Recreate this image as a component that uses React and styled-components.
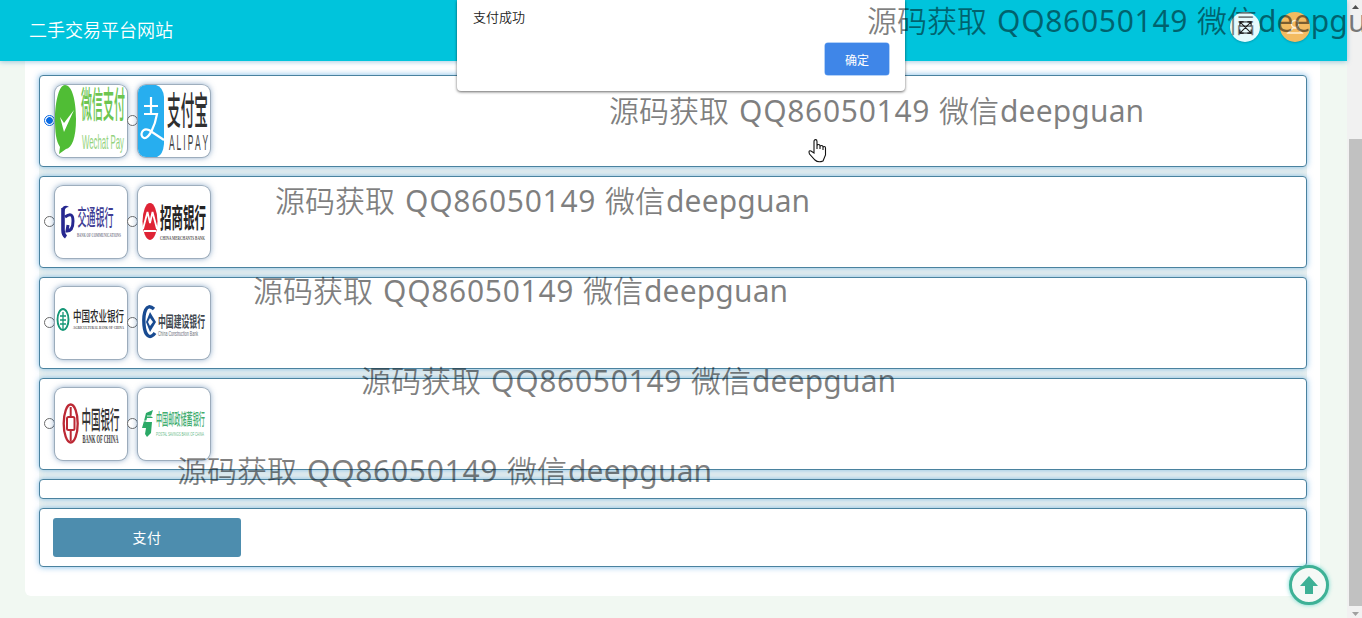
import React from "react";
import styled, { createGlobalStyle } from "styled-components";

const cjk = '"Noto Sans CJK SC", sans-serif';

const Global = createGlobalStyle`
  * { box-sizing: border-box; }
  html, body { margin: 0; height: 618px; overflow: hidden; }
  body { font-family: "Liberation Sans", ${cjk}; background: #f1f8f2; }
`;

const Screen = styled.div`
  position: relative;
  display: flex;
  width: 1362px;
  height: 618px;
  overflow: hidden;
  background: #f1f8f2;
`;

const Page = styled.div`
  width: 1347px;
  display: flex;
  flex-direction: column;
`;

const Header = styled.header`
  position: relative;
  z-index: 1;
  flex: none;
  display: flex;
  align-items: center;
  justify-content: space-between;
  height: 61px;
  padding: 0 37px 0 29px;
  background: #00c4dc;
  box-shadow: 0 1px 5px rgba(0, 110, 170, 0.35);
`;

const Title = styled.h1`
  margin: 0 0 4px;
  color: #fff;
  font: 350 18px/26px ${cjk};
`;

const HeaderTools = styled.div`
  display: flex;
  gap: 20px;
  margin-bottom: 7px;
`;

const RoundTool = styled.span`
  display: flex;
  align-items: center;
  justify-content: center;
  width: 30px;
  height: 30px;
  border-radius: 50%;
  background: ${(p) => p.$bg};
  box-shadow: 0 1px 2px rgba(0, 70, 90, 0.3);
`;

const Panel = styled.main`
  width: 1295px;
  height: 535px;
  margin-left: 25px;
  padding: 14px 13px 0 14px;
  background: #fff;
  border-radius: 0 0 6px 6px;
`;

const Form = styled.form`
  display: flex;
  flex-direction: column;
  gap: 9px;
  background: #f0f4f0;
  border-radius: 5px;
`;

const Row = styled.div`
  display: flex;
  align-items: center;
  height: ${(p) => p.$height}px;
  padding: 0 ${(p) => p.$pad || 4}px;
  border: 1px solid #4a829f;
  border-radius: 4px;
  background: #fff;
  box-shadow: 0 0 6px rgba(40, 140, 215, 0.6);
`;

const Option = styled.label`
  display: flex;
  align-items: center;
  width: 83px;
`;

const Radio = styled.span`
  flex: none;
  width: 11px;
  height: 11px;
  margin-bottom: 1px;
  border: 1px solid ${(p) => (p.$on ? "#0b6be4" : "#6a6a6a")};
  border-radius: 50%;
  background: ${(p) => (p.$on ? "radial-gradient(circle, #0b6be4 0 3px, #fff 3.7px)" : "#fff")};
`;

const Logo = styled.svg`
  flex: none;
  display: block;
  width: 72px;
  height: 72px;
  border-radius: 8px;
  background: #fff;
  box-shadow: 0 0 0 0.8px #93a3b2, 0 0 6px rgba(60, 110, 160, 0.75);
`;

const PayButton = styled.button`
  width: 188px;
  height: 39px;
  padding: 0 0 1px;
  border: 0;
  border-radius: 3px;
  background: #4d8dae;
  color: #fff;
  font: 400 14px/20px ${cjk};
  letter-spacing: 0.5px;
`;

const Scrollbar = styled.aside`
  width: 15px;
  display: flex;
  flex-direction: column;
  align-items: center;
  padding-left: 2px;
  background: #f1f1f1;
`;

const Arrow = styled.svg`
  flex: none;
  width: 13px;
  height: 13px;
`;

const Track = styled.div`
  flex: 1;
  width: 13px;
  padding-top: 126px;
`;

const Thumb = styled.div`
  height: 467px;
  background: #c1c1c1;
`;

const Dialog = styled.div`
  position: absolute;
  z-index: 2;
  left: 457px;
  top: 0;
  width: 448px;
  height: 91px;
  display: flex;
  flex-direction: column;
  justify-content: space-between;
  padding: 7px 16px 16px;
  border-radius: 0 0 4px 4px;
  background: #fff;
  box-shadow: 0 1px 3px rgba(0, 0, 0, 0.6);
`;

const Message = styled.p`
  margin: 0;
  color: #222;
  font: 350 13px/19px ${cjk};
`;

const Confirm = styled.button`
  align-self: flex-end;
  width: 64px;
  height: 32px;
  padding: 1px 0 0;
  border: 0;
  border-radius: 3px;
  background: #3f86e8;
  box-shadow: 0 0 0 0.5px #69a3f0;
  color: #fff;
  font: 400 12px/18px ${cjk};
`;

const Watermark = styled.div`
  position: absolute;
  z-index: 4;
  left: ${(p) => p.$x}px;
  top: ${(p) => p.$y}px;
  display: flex;
  white-space: nowrap;
  color: rgba(0, 0, 0, 0.5);
  font: 350 30px/40px ${cjk};
`;

const Han = styled.span`
  margin: -1px 1px 0 -1px;
`;

const Latin = styled.span`
  width: ${(p) => p.$width}px;
  font-family: "Noto Sans", sans-serif;
  font-weight: 400;
  padding: 1px 0 0 ${(p) => p.$indent || 0}px;
  letter-spacing: ${(p) => p.$spacing || 0}px;
`;

const Pointer = styled.svg`
  position: absolute;
  z-index: 5;
  left: 808px;
  top: 138px;
`;

const TopButton = styled.div`
  position: absolute;
  z-index: 3;
  left: 1289px;
  top: 565px;
  width: 40px;
  height: 40px;
  display: flex;
  align-items: center;
  justify-content: center;
  border: 3px solid #3eb196;
  border-radius: 50%;
  background: #f5f9f6;
  box-shadow: 0 0 4px rgba(50, 200, 190, 0.7);
`;

function Label({ x, y, size, width, color, children, serif, weight = 400, stretch = 1 }) {
  return (
    <text
      transform={`translate(${x} ${y}) scale(1 ${stretch})`}
      fontSize={size}
      textLength={width}
      lengthAdjust="spacingAndGlyphs"
      fill={color}
      fontWeight={weight}
      fontFamily={serif ? '"Liberation Serif", serif' : '"Liberation Sans", "Noto Sans CJK SC", sans-serif'}
    >
      {children}
    </text>
  );
}

const logos = {
  wechat: (
    <>
      <path d="M10 0C17 0 21 15 21 34S17 63 11 64L4 69 5 62C1 56 0 47 0 34S3 0 10 0Z" fill="#50bd35" />
      <path d="M5 32 9 38 19 25 9 47Z" fill="#fff" />
      <Label x={26} y={33} size={11} width={44} stretch={3.3} color="#6cc550" weight={500}>微信支付</Label>
      <Label x={27} y={64} size={10} width={42} stretch={2.1} color="#94d37e">Wechat Pay</Label>
    </>
  ),
  alipay: (
    <>
      <path d="M0 0H18Q25 2 26 12V59Q25 70 19 72H0Z" fill="#27aeef" />
      <path d="M6 21H20M13 12V29M6 29H19C17 41 11 54 6 53C1 51 4 42 11 45L26 55" fill="none" stroke="#fff" strokeWidth="2.2" />
      <Label x={29} y={39} size={13.5} width={41} stretch={2.8} color="#303030" weight={500}>支付宝</Label>
      <Label x={31} y={65} size={10} width={39} stretch={2.2} color="#444">A L I P A Y</Label>
    </>
  ),
  communications: (
    <>
      <path d="M8 22V44Q8 49 11 51" fill="none" stroke="#262790" strokeWidth="3.6" />
      <path d="M7 22Q10 18 14 21Q10 21 9 26Z" fill="#262790" />
      <path d="M10 31Q18 25 18 35Q18 45 12 45L13 39" fill="none" stroke="#262790" strokeWidth="3" />
      <Label x={22.5} y={39} size={9} width={36} stretch={2.35} color="#3e3d94" weight={500}>交通银行</Label>
      <Label x={22} y={50.5} size={5.5} width={44} color="#81808e" serif weight={700}>BANK OF COMMUNICATIONS</Label>
    </>
  ),
  merchants: (
    <>
      <ellipse cx="12" cy="35.5" rx="7.5" ry="18.5" fill="#df2335" />
      <path d="M5 43 9.5 26 12 37 14.5 26 19 43M6 45H18" fill="none" stroke="#fff" strokeWidth="1.8" />
      <Label x={22} y={42} size={11.5} width={46} stretch={2.4} color="#252323" weight={700}>招商银行</Label>
      <Label x={22} y={54} size={5.5} width={45} color="#625b5b" serif weight={700}>CHINA MERCHANTS BANK</Label>
    </>
  ),
  agricultural: (
    <>
      <ellipse cx="8" cy="32.5" rx="5.5" ry="10.5" fill="none" stroke="#159777" strokeWidth="1.9" />
      <path d="M8 25V42M5 29H11M5 33H11M5 37H11" stroke="#159777" strokeWidth="1.3" />
      <Label x={18} y={33.5} size={8.5} width={51} stretch={1.6} color="#292929" weight={500}>中国农业银行</Label>
      <Label x={18} y={42} size={4.5} width={51} color="#595959" serif weight={700}>AGRICULTURAL BANK OF CHINA</Label>
    </>
  ),
  construction: (
    <>
      <path d="M16 22C8 15 5 26 6 38C7 49 12 53 17 46" fill="none" stroke="#194b91" strokeWidth="3.4" />
      <path d="M12 25 18 35 12 45 8 35Z" fill="#194b91" />
      <path d="M12 31 15 35 12 39 10 35Z" fill="#fff" />
      <Label x={20} y={39.5} size={7.8} width={47} stretch={1.9} color="#414750" weight={700}>中国建设银行</Label>
      <Label x={20} y={49} size={7} width={40} color="#676e76">China Construction Bank</Label>
    </>
  ),
  china: (
    <>
      <ellipse cx="15.7" cy="35.5" rx="7" ry="19" fill="none" stroke="#bc2935" strokeWidth="2.3" />
      <rect x="12" y="29" width="7.5" height="13" rx="1.5" fill="none" stroke="#bc2935" strokeWidth="2" />
      <path d="M15.7 19V29M15.7 42V53" stroke="#bc2935" strokeWidth="2" />
      <Label x={26.5} y={40.5} size={9.4} width={38} stretch={2.7} color="#333" weight={500}>中国银行</Label>
      <Label x={27.5} y={55} size={6} width={36} stretch={2} color="#393939" serif weight={700}>BANK OF CHINA</Label>
    </>
  ),
  postal: (
    <>
      <path d="M8 25 15 22 13 28 15 30H9L8 34H14L13 45 9 49 7 46 8 40H4L6 33Z" fill="#2ba967" />
      <path d="M6 33H14M9 28H15" stroke="#fff" strokeWidth="0.9" />
      <Label x={18} y={37} size={6.1} width={49} stretch={2.6} color="#43ad70" weight={500}>中国邮政储蓄银行</Label>
      <Label x={18} y={47.5} size={6} width={48} color="#69ba8a">POSTAL SAVINGS BANK OF CHINA</Label>
    </>
  ),
};

const bankRows = [
  ["wechat", "alipay"],
  ["communications", "merchants"],
  ["agricultural", "construction"],
  ["china", "postal"],
];

const marks = [
  [868, 0],
  [610, 90],
  [276, 180],
  [254, 270],
  [362, 360],
  [178, 450],
];

export default function App() {
  return (
    <Screen>
      <Global />
      <Page>
        <Header>
          <Title>二手交易平台网站</Title>
          <HeaderTools>
            <RoundTool $bg="#e6fbfd">
              <svg width="15" height="15" viewBox="0 0 16 16" fill="none" stroke="#222" strokeWidth="1.2">
                <path d="M2 2 14 14M14 2 2 14M2 6V2H6M10 2H14V6M14 10V14H10M6 14H2V10" />
              </svg>
            </RoundTool>
            <RoundTool $bg="#f3bb60">
              <svg width="18" height="18" viewBox="0 0 18 18" fill="none" stroke="#fff0d4" strokeWidth="1.4">
                <circle cx="9" cy="6" r="3.5" />
                <path d="M2 15 7 10H11L16 15Z" />
              </svg>
            </RoundTool>
          </HeaderTools>
        </Header>
        <Panel>
          <Form>
            {bankRows.map((row, index) => (
              <Row key={index} $height={92}>
                {row.map((name) => (
                  <Option key={name}>
                    <Radio $on={name === "wechat"} />
                    <Logo viewBox="0 0 72 72">{logos[name]}</Logo>
                  </Option>
                ))}
              </Row>
            ))}
            <Row $height={20} />
            <Row $height={59} $pad={13}>
              <PayButton type="button">支付</PayButton>
            </Row>
          </Form>
        </Panel>
      </Page>
      <Scrollbar>
        <Arrow viewBox="0 0 13 13"><path d="M3 9 6.5 5 10 9Z" fill="#505050" /></Arrow>
        <Track><Thumb /></Track>
        <Arrow viewBox="0 0 13 13"><path d="M3 6 6.5 10 10 6Z" fill="#a0a0a0" /></Arrow>
      </Scrollbar>
      <Dialog>
        <Message>支付成功</Message>
        <Confirm type="button">确定</Confirm>
      </Dialog>
      <TopButton>
        <svg width="18" height="18" viewBox="0 0 18 18"><path d="M9 0 18 10H13V18H5V10H0Z" fill="#3eb196" /></svg>
      </TopButton>
      {marks.map(([x, y]) => (
        <Watermark key={y} $x={x} $y={y}>
          <Han>源码获取</Han>
          <Latin $width={210} $indent={9} $spacing={0.7}>QQ86050149</Latin>
          <Han>微信</Han>
          <Latin $width={145} $spacing={0.15}>deepguan</Latin>
        </Watermark>
      ))}
      <Pointer width="20" height="26" viewBox="0 0 20 26">
        <path d="M6 15V3.5C6 1 9 1 9 3.5V11 8C9 6 12 6 12 8V11 9C12 7 15 7 15 9V12 10C15 8 17.5 8 17.5 10V17L15 23Q10 25 7 22L1.5 16Q0 12 3 13Z" fill="#fff" stroke="#111" strokeWidth="1.1" />
      </Pointer>
    </Screen>
  );
}
